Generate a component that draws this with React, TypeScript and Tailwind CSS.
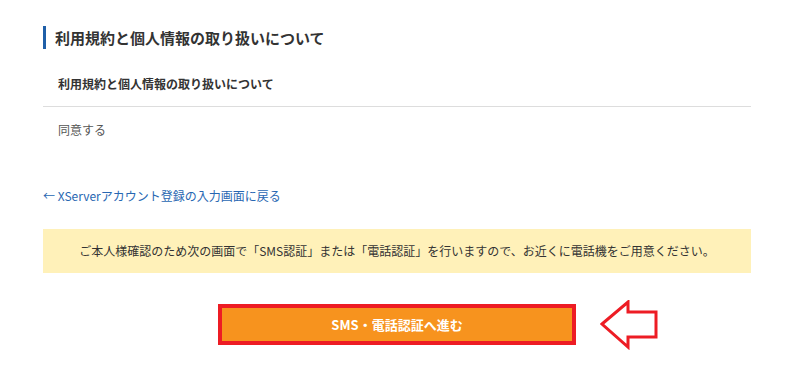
const font = { fontFamily: '"Noto Sans CJK JP", "Noto Sans", sans-serif' };

const App = () => {
  return (
    <div className="w-[800px] h-[385px] bg-white text-[#333]" style={font}>
      <div className="ml-[43px] w-[708px] pt-[26px]">
        <h2 className="flex items-center h-[23px] border-l-[3px] border-[#1f5fa8] pl-[9px] text-[15px] font-bold leading-none">
          利用規約と個人情報の取り扱いについて
        </h2>
        <div className="mt-[14px] pl-[15px] h-[44px] flex items-center border-b border-[#ddd] text-[12px] font-bold">
          <span className="-mt-[1px]">利用規約と個人情報の取り扱いについて</span>
        </div>
        <div className="pl-[15px] pt-[14px] text-[12px] text-[#555] leading-[17px]">同意する</div>
        <a className="block mt-[49px] text-[12px] text-[#2867b2] leading-[17px]" href="#">
          ← XServerアカウント登録の入力画面に戻る
        </a>
        <div className="mt-[25px] h-[44px] bg-[#fff1b9] flex items-center justify-center text-[12px] text-[#333]">
          ご本人様確認のため次の画面で「SMS認証」または「電話認証」を行いますので、お近くに電話機をご用意ください。
        </div>
        <div className="relative mt-[31px] flex justify-center">
          <button className="w-[358px] h-[41px] bg-[#f7931e] border-[4px] border-[#ed1c24] text-white text-[13px] font-bold">
            SMS・電話認証へ進む
          </button>
          <svg
            className="absolute left-[557px] -top-[4px]"
            width="60"
            height="50"
            viewBox="0 0 60 50"
          >
            <path
              d="M2 24 L28 2 L28 12 L56 12 L56 37 L28 37 L28 47 Z"
              fill="none"
              stroke="#ed1c24"
              strokeWidth="3"
              strokeLinejoin="miter"
            />
          </svg>
        </div>
      </div>
    </div>
  );
};

export default App;
